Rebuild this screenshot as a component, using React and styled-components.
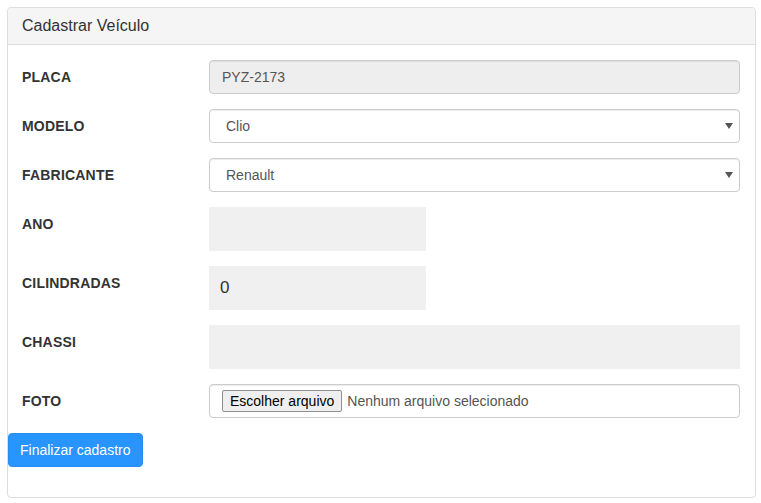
import React from "react";
import styled, { createGlobalStyle } from "styled-components";

const GlobalStyle = createGlobalStyle`
  body {
    margin: 0;
    background: #fff;
    font-family: "Liberation Sans", Arial, sans-serif;
    font-size: 14px;
    color: #333;
  }
  * { box-sizing: border-box; }
`;

const Panel = styled.div`
  width: 749px;
  margin: 7px;
  border: 1px solid #ddd;
  border-radius: 4px;
  background: #fff;
`;

const Heading = styled.div`
  background: #f5f5f5;
  border-bottom: 1px solid #ddd;
  border-radius: 3px 3px 0 0;
  padding: 10px 14px;
  font-size: 16px;
  line-height: 16px;
  color: #333;
`;

const Body = styled.div`
  padding: 15px 0 30px 0;
`;

const Row = styled.div`
  display: grid;
  grid-template-columns: 187px 1fr;
  padding: 0 15px 0 14px;
  margin-bottom: 15px;
`;

const Label = styled.label`
  font-weight: bold;
  font-size: 14px;
  line-height: 34px;
  color: #333;
  letter-spacing: 0.2px;
`;

const TextInput = styled.input`
  height: 34px;
  width: 100%;
  padding: 6px 12px;
  border: 1px solid #ccc;
  border-radius: 4px;
  font-family: inherit;
  font-size: 14px;
  color: #555;
  background: ${(p) => (p.disabled ? "#eee" : "#fff")};
  box-shadow: inset 0 1px 1px rgba(0, 0, 0, 0.075);
`;

const SelectWrap = styled.div`
  position: relative;
`;

const Select = styled.select`
  appearance: none;
  height: 34px;
  width: 100%;
  padding: 6px 16px;
  border: 1px solid #ccc;
  border-radius: 4px;
  font-family: inherit;
  font-size: 14px;
  color: #555;
  background: #fff;
  box-shadow: inset 0 1px 1px rgba(0, 0, 0, 0.075);
`;

const Caret = styled.svg`
  position: absolute;
  right: 7px;
  top: 14px;
  pointer-events: none;
`;

const Box = styled.input`
  height: 44px;
  width: ${(p) => (p.$short ? "217px" : "100%")};
  border: none;
  background: #f0f0f0;
  padding: 0 11px;
  font-family: inherit;
  font-size: 17px;
  color: #333;
  outline: none;
`;

const FileBox = styled.div`
  height: 34px;
  border: 1px solid #ccc;
  border-radius: 4px;
  display: flex;
  align-items: center;
  padding: 0 12px;
  gap: 5px;
  box-shadow: inset 0 1px 1px rgba(0, 0, 0, 0.075);
`;

const FileButton = styled.button`
  height: 22px;
  padding: 0 7px;
  background: #efefef;
  border: 1px solid #8f8f8f;
  border-radius: 2px;
  font-family: inherit;
  font-size: 14px;
  color: #000;
`;

const FileText = styled.span`
  font-size: 14px;
  color: #555;
`;

const Submit = styled.button`
  height: 34px;
  padding: 0 11px;
  background: #2894fd;
  border: 1px solid #2a8cf0;
  border-radius: 4px;
  color: #fff;
  font-family: inherit;
  font-size: 14px;
`;

function Dropdown({ value }) {
  return (
    <SelectWrap>
      <Select defaultValue={value}>
        <option>{value}</option>
      </Select>
      <Caret width="8" height="6" viewBox="0 0 8 6">
        <path d="M0 0h8L4 6z" fill="#555" />
      </Caret>
    </SelectWrap>
  );
}

export default function App() {
  return (
    <>
      <GlobalStyle />
      <Panel>
        <Heading>Cadastrar Veículo</Heading>
        <Body>
          <Row>
            <Label>PLACA</Label>
            <TextInput disabled defaultValue="PYZ-2173" />
          </Row>
          <Row>
            <Label>MODELO</Label>
            <Dropdown value="Clio" />
          </Row>
          <Row>
            <Label>FABRICANTE</Label>
            <Dropdown value="Renault" />
          </Row>
          <Row>
            <Label>ANO</Label>
            <Box $short />
          </Row>
          <Row>
            <Label>CILINDRADAS</Label>
            <Box $short defaultValue="0" />
          </Row>
          <Row>
            <Label>CHASSI</Label>
            <Box />
          </Row>
          <Row>
            <Label>FOTO</Label>
            <FileBox>
              <FileButton>Escolher arquivo</FileButton>
              <FileText>Nenhum arquivo selecionado</FileText>
            </FileBox>
          </Row>
          <Submit>Finalizar cadastro</Submit>
        </Body>
      </Panel>
    </>
  );
}
